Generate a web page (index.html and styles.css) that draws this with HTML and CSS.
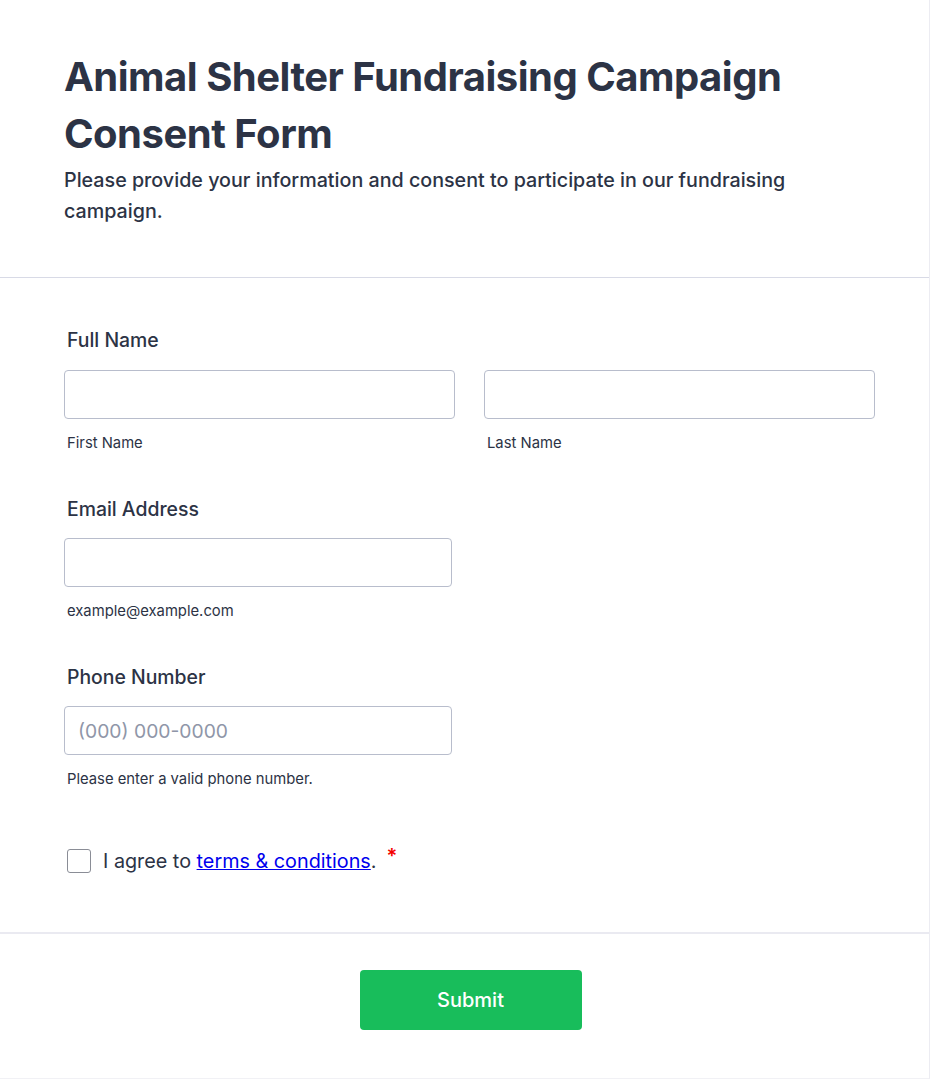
FILE: index.html
```html
<!DOCTYPE html>
<html lang="en">
<head>
<meta charset="utf-8">
<title>Animal Shelter Fundraising Campaign Consent Form</title>
<link rel="stylesheet" href="styles.css">
</head>
<body>
<div class="card">
  <header class="form-header">
    <h1 class="title">Animal Shelter Fundraising Campaign Consent Form</h1>
    <p class="subtitle">Please provide your information and consent to participate in our fundraising campaign.</p>
  </header>
  <form class="form-body">
    <div class="field">
      <label class="label">Full Name</label>
      <div class="name-row">
        <div class="name-col">
          <input class="input" type="text">
          <span class="sub">First Name</span>
        </div>
        <div class="name-col">
          <input class="input" type="text">
          <span class="sub">Last Name</span>
        </div>
      </div>
    </div>
    <div class="field">
      <label class="label">Email Address</label>
      <input class="input half" type="email">
      <span class="sub">example@example.com</span>
    </div>
    <div class="field">
      <label class="label">Phone Number</label>
      <input class="input half" type="tel" placeholder="(000) 000-0000">
      <span class="sub">Please enter a valid phone number.</span>
    </div>
    <div class="agree">
      <span class="checkbox"></span>
      <span class="agree-text">I agree to <a href="#" class="link">terms &amp; conditions</a>.</span>
      <span class="req">*</span>
    </div>
  </form>
  <footer class="form-footer">
    <button class="submit" type="button">Submit</button>
  </footer>
</div>
</body>
</html>
```
FILE: styles.css
```css
* { box-sizing: border-box; }
html, body { margin: 0; padding: 0; background: #fff; }
body { font-family: "Inter", "Noto Sans", sans-serif; color: #2c3345; }

.card {
  width: 930px;
  border-right: 1px solid #ececf2;
  border-bottom: 1px solid #f1f1f5;
  background: #fff;
}

.form-header {
  padding: 48px 64px 50px;
  border-bottom: 1px solid #d8dae6;
}
.title {
  margin: 0;
  font-size: 40px;
  line-height: 57px;
  font-weight: 700;
  letter-spacing: -0.5px;
  width: 760px;
}
.subtitle {
  margin: 3px 0 0;
  font-size: 19.7px;
  line-height: 31px;
  font-weight: 500;
  width: 770px;
}

.form-body {
  display: flex;
  flex-direction: column;
  padding: 50px 54px 59px 64px;
}
.field { margin-bottom: 45px; display: flex; flex-direction: column; }
.label {
  font-size: 19.4px;
  line-height: 24px;
  font-weight: 500;
  padding-left: 3px;
  margin-bottom: 17px;
}
.field:first-child .label { margin-bottom: 18px; }
.name-row { display: flex; gap: 29px; }
.name-col { display: flex; flex-direction: column; width: 391px; }
.input {
  display: block;
  width: 100%;
  height: 49px;
  border: 1px solid #b8bdcc;
  border-radius: 4px;
  padding: 0 13px;
  font-family: "Inter", sans-serif;
  font-size: 19.3px;
  color: #2c3345;
  background: #fff;
  outline: none;
}
.input.half { width: 388px; }
.input::placeholder { color: #8f96a8; }
.sub {
  font-size: 14.8px;
  line-height: 18px;
  padding-left: 3px;
  margin-top: 15px;
  color: #2c3345;
}

.agree {
  display: flex;
  align-items: center;
  padding-left: 3px;
  margin-top: 16px;
  height: 24px;
}
.checkbox {
  width: 24px;
  height: 24px;
  border: 1.5px solid #8a8d96;
  border-radius: 3px;
  background: #fff;
  margin-right: 12px;
}
.agree-text { font-size: 19.8px; line-height: 24px; color: #2c3345; }
.link { color: #0000ee; text-decoration: underline; }
.req { color: #f40000; font-size: 20px; line-height: 24px; margin-left: 10px; position: relative; top: -5px; font-weight: 600; }

.form-footer {
  border-top: 2px solid #eaeaf1;
  display: flex;
  justify-content: center;
  padding: 36px 0 48px 12px;
}
.submit {
  width: 222px;
  height: 60px;
  background: #18bd5b;
  color: #fff;
  border: none;
  border-radius: 4px;
  font-family: "Inter", sans-serif;
  font-size: 20px;
  font-weight: 500;
}
```
